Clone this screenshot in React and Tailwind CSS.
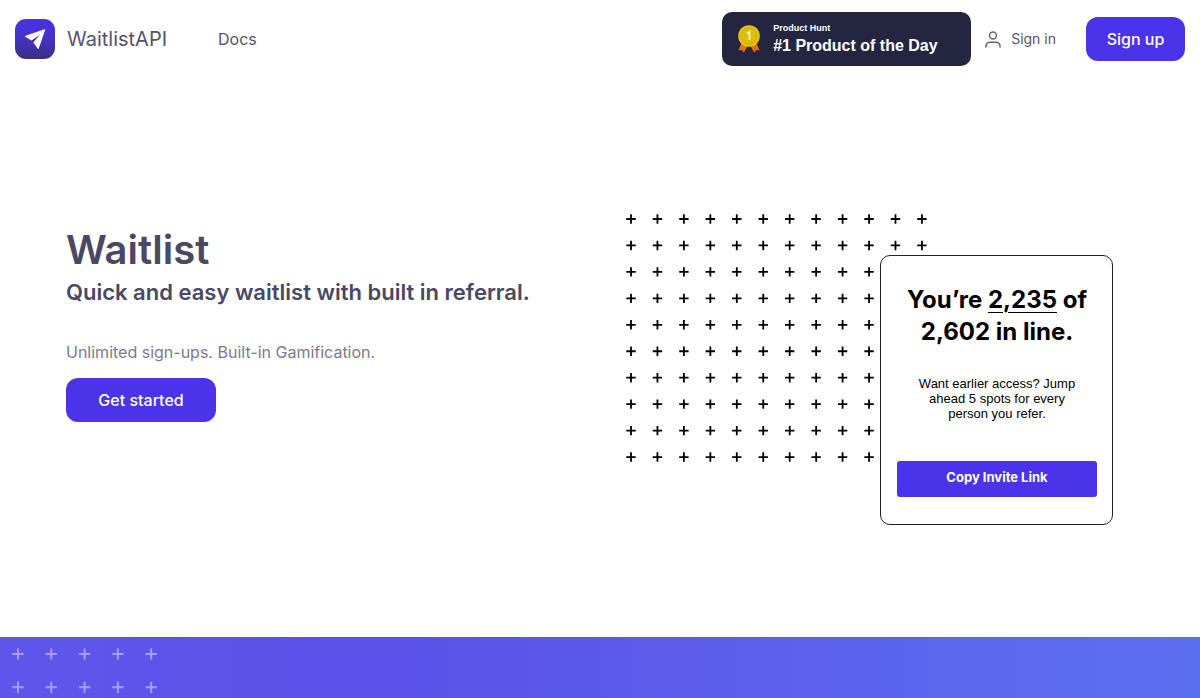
function PlusGrid({ cols, rows, gap, arm, pad, className, strokeWidth }) {
  const w = gap * (cols - 1) + pad * 2;
  const h = gap * (rows - 1) + pad * 2;
  const marks = [];
  for (let r = 0; r < rows; r++) {
    for (let c = 0; c < cols; c++) {
      const x = pad + c * gap;
      const y = pad + r * gap;
      marks.push(`M${x - arm} ${y}h${arm * 2}M${x} ${y - arm}v${arm * 2}`);
    }
  }
  return (
    <svg
      width={w}
      height={h}
      viewBox={`0 0 ${w} ${h}`}
      className={className}
      fill="none"
      stroke="currentColor"
      strokeWidth={strokeWidth}
      aria-hidden="true"
    >
      <path d={marks.join("")} />
    </svg>
  );
}

function Logo() {
  return (
    <svg className="size-10 shrink-0" viewBox="0 0 40 40" aria-hidden="true">
      <defs>
        <linearGradient id="logo" x1="0" y1="0" x2="0" y2="1">
          <stop offset="0" stopColor="#4733df" />
          <stop offset="0.45" stopColor="#4633cb" />
          <stop offset="1" stopColor="#3a2f80" />
        </linearGradient>
      </defs>
      <rect width="40" height="40" rx="11" fill="url(#logo)" />
      <path
        d="M29.600 10.300 10.600 16.800c-.6.200-.6.900-.1 1.200l6 3.500L25.200 15.400 18.300 23.400 22.600 29.600c.4.500 1 .400 1.200-.2L30.100 10.900c.1-.4-.1-.7-.5-.6Z"
        fill="#fff"
      />
    </svg>
  );
}

function Medal() {
  return (
    <svg className="h-8 w-6 shrink-0" viewBox="0 0 24 32" aria-hidden="true">
      <path d="M4.500 20 1.500 27.500l3.500-.6 1.800 2.800L11 22Z" fill="#e0701f" />
      <path d="m19.500 20 3 7.500-3.500-.6-1.800 2.800L13 22Z" fill="#e0701f" />
      <circle cx="12" cy="13" r="10.800" fill="#e6c50f" />
      <circle cx="12" cy="13" r="8.200" fill="#dfbc0c" stroke="#d0aa0c" strokeWidth="0.800" />
      <path d="M9.800 10.400 12.500 8.800V17" fill="none" stroke="#fff3ae" strokeWidth="1.800" />
    </svg>
  );
}

function UserIcon() {
  return (
    <svg
      className="size-5 shrink-0 text-[#656379]"
      viewBox="0 0 20 20"
      fill="none"
      stroke="currentColor"
      strokeWidth="1.500"
      strokeLinecap="round"
      aria-hidden="true"
    >
      <circle cx="10" cy="6.500" r="3.500" />
      <path d="M3 18v-1a3.800 3.800 0 0 1 3.800-3.800h6.400A3.800 3.800 0 0 1 17 17v1" />
    </svg>
  );
}

export default function App() {
  return (
    <div className="flex min-h-screen flex-col overflow-x-hidden bg-white font-['Inter',sans-serif] text-[#4a4862]">
      <header className="flex items-center justify-between px-[15px] py-3">
        <nav className="flex items-center">
          <a href="#home" className="flex items-center gap-3 text-xl text-[#55536c]">
            <Logo />
            WaitlistAPI
          </a>
          <a href="#docs" className="ml-[51px] text-base text-[#55536c]">
            Docs
          </a>
        </nav>
        <div className="flex items-center">
          <a
            href="#product-hunt"
            className="flex h-[54px] w-[249px] items-center gap-3 rounded-[10px] bg-[#24263f] px-[15px] font-['Liberation_Sans',sans-serif] font-bold text-white"
          >
            <Medal />
            <span className="flex flex-col gap-0.5">
              <span className="text-[9px] leading-3">Product Hunt</span>
              <span className="text-base leading-5">#1 Product of the Day</span>
            </span>
          </a>
          <a
            href="#sign-in"
            className="ml-3 flex items-center gap-2 text-sm text-[#55536c]"
          >
            <UserIcon />
            Sign in
          </a>
          <button
            type="button"
            className="ml-[30px] h-11 w-[99px] rounded-xl bg-[#4a33e8] text-base font-medium text-white"
          >
            Sign up
          </button>
        </div>
      </header>

      <main className="flex grow flex-col">
        <section className="flex items-start justify-between pr-[87px] pb-28 pl-[66px] pt-[136px]">
          <div className="pt-3">
            <h1 className="text-[40px] font-semibold leading-[48px]">Waitlist</h1>
            <h2 className="mt-0.5 text-[22px] font-semibold leading-8">
              Quick and easy waitlist with built in referral.
            </h2>
            <p className="mt-8 text-base leading-6 text-[#7c7a8e]">
              Unlimited sign-ups. Built-in Gamification.
            </p>
            <button
              type="button"
              className="mt-3.5 h-11 w-[150px] rounded-xl bg-[#4a33e8] text-base font-medium text-white"
            >
              Get started
            </button>
          </div>

          <div className="grid w-[487px] shrink-0">
            <PlusGrid
              cols={12}
              rows={10}
              gap={26.45}
              arm={4.7}
              pad={5}
              strokeWidth={1.8}
              className="col-start-1 row-start-1 text-black"
            />
            <div className="col-start-1 row-start-1 mt-[41px] flex w-[233px] flex-col justify-self-end rounded-[10px] border border-[#222] bg-white pr-[15px] pb-[27px] pl-4 pt-7 text-center text-black">
              <p className="text-2xl font-bold leading-8">
                You’re{" "}
                <span className="underline decoration-1 underline-offset-4">2,235</span> of
                <br />
                2,602 in line.
              </p>
              <p className="mt-7 font-['Liberation_Sans',sans-serif] text-[13px] leading-[15px]">
                Want earlier access? Jump
                <br />
                ahead 5 spots for every
                <br />
                person you refer.
              </p>
              <button
                type="button"
                className="mt-10 h-9 rounded-[3px] bg-[#4a33e8] pb-0.5 text-[13px] font-bold text-white"
              >
                Copy Invite Link
              </button>
            </div>
          </div>
        </section>

        <section className="grow bg-linear-to-r from-[#5f57eb] via-[#5a50ea] via-30% to-[#5d6ff1] px-3 pt-[11px]">
          <PlusGrid
            cols={5}
            rows={2}
            gap={33.3}
            arm={5.6}
            pad={6}
            strokeWidth={2}
            className="block text-[#a79ff7]"
          />
        </section>
      </main>
    </div>
  );
}
